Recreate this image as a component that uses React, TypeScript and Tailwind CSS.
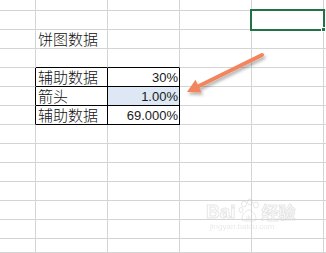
import React from "react";

const COLS = 6;
const ROWS = 14;

type Cell = { text?: string; align?: "left" | "right"; fill?: boolean };

// "row-col" -> cell
const cells: Record<string, Cell> = {
  "2-1": { text: "饼图数据" },
  "4-1": { text: "辅助数据" },
  "4-2": { text: "30%", align: "right" },
  "5-1": { text: "箭头" },
  "5-2": { text: "1.00%", align: "right", fill: true },
  "6-1": { text: "辅助数据" },
  "6-2": { text: "69.000%", align: "right" },
};

const GridCell = ({ r, c }: { r: number; c: number }) => {
  const cell = cells[`${r}-${c}`];
  const blackRight = r >= 4 && r <= 6 && c <= 2;
  const blackBottom = r >= 3 && r <= 6 && (c === 1 || c === 2);
  const isNum = cell?.align === "right";
  return (
    <div
      className={[
        "relative flex items-end whitespace-nowrap border-r border-b",
        blackRight ? "border-r-black" : "border-r-[#d4d4d4]",
        blackBottom ? "border-b-black" : "border-b-[#d4d4d4]",
        cell?.fill ? "bg-[#dde8f4]" : "",
        isNum ? "justify-end pr-[1px]" : "pl-[2px]",
      ].join(" ")}
    >
      {cell?.text && (
        <span
          className={
            isNum
              ? "text-[13px] leading-[17px] text-[#1a1a1a] font-['Liberation_Sans',sans-serif]"
              : "text-[15px] leading-[18px] font-light text-[#111] font-['Noto_Sans_CJK_SC',sans-serif]"
          }
        >
          {cell.text}
        </span>
      )}
      {r === 1 && c === 4 && (
        <div className="absolute -left-[2px] -top-[2px] w-[75px] h-[22px] border-2 border-[#217346] z-20">
          <div className="absolute -right-[3px] -bottom-[3px] w-[5px] h-[5px] bg-[#217346] border border-white" />
        </div>
      )}
    </div>
  );
};

const Arrow = () => (
  <svg className="absolute left-0 top-0 z-30 pointer-events-none" width="326" height="253">
    <defs>
      <filter id="sh" x="-20%" y="-20%" width="140%" height="160%">
        <feDropShadow dx="1.5" dy="2.5" stdDeviation="1.8" floodColor="#000" floodOpacity="0.3" />
      </filter>
    </defs>
    <g filter="url(#sh)">
      <line x1="262" y1="55" x2="199" y2="86" stroke="#f2855d" strokeWidth="4" strokeLinecap="round" />
      <polygon points="187,92 201.6,92.5 195.5,79.8" fill="#f2855d" />
    </g>
  </svg>
);

const Watermark = () => (
  <div className="absolute left-[206px] top-[198px] z-30 pointer-events-none opacity-45">
    <div className="flex items-end gap-[2px]">
      <span className="text-[19px] leading-[20px] font-bold text-white [-webkit-text-stroke:1px_#c8c8c8] font-['Liberation_Sans',sans-serif]">
        Bai
      </span>
      <svg width="22" height="24" viewBox="0 0 22 24">
        <g fill="none" stroke="#c8c8c8" strokeWidth="1">
          <ellipse cx="6" cy="6" rx="2.5" ry="3" />
          <ellipse cx="12" cy="4" rx="2.5" ry="3" />
          <ellipse cx="18" cy="7" rx="2.5" ry="3" />
          <ellipse cx="3" cy="12" rx="2" ry="2.5" />
          <path d="M4 21c0-5 4-9 7-9s7 4 7 9c0 2-2 2-7 2s-7 0-7-2z" />
        </g>
        <text x="11" y="21" textAnchor="middle" fontSize="6" fill="#c8c8c8" fontFamily="Liberation Sans">du</text>
      </svg>
      <span className="text-[17px] leading-[20px] font-bold text-white [-webkit-text-stroke:1px_#c8c8c8] font-['Noto_Sans_CJK_SC',sans-serif]">
        经验
      </span>
    </div>
    <div className="pl-[4px] text-[8px] leading-[10px] text-[#cfcfcf] font-['Liberation_Sans',sans-serif]">
      jingyan.baidu.com
    </div>
  </div>
);

export default function App() {
  return (
    <div className="relative w-[326px] h-[253px] overflow-hidden bg-white">
      <div className="grid grid-cols-[36px_72px_72px_72px_72px_2px] grid-rows-[11px_19px_19px_19px_19px_19px_19px_19px_19px_19px_19px_19px_19px_14px]">
        {Array.from({ length: ROWS }, (_, r) =>
          Array.from({ length: COLS }, (_, c) => <GridCell key={`${r}-${c}`} r={r} c={c} />)
        )}
      </div>
      <Arrow />
      <Watermark />
    </div>
  );
}
